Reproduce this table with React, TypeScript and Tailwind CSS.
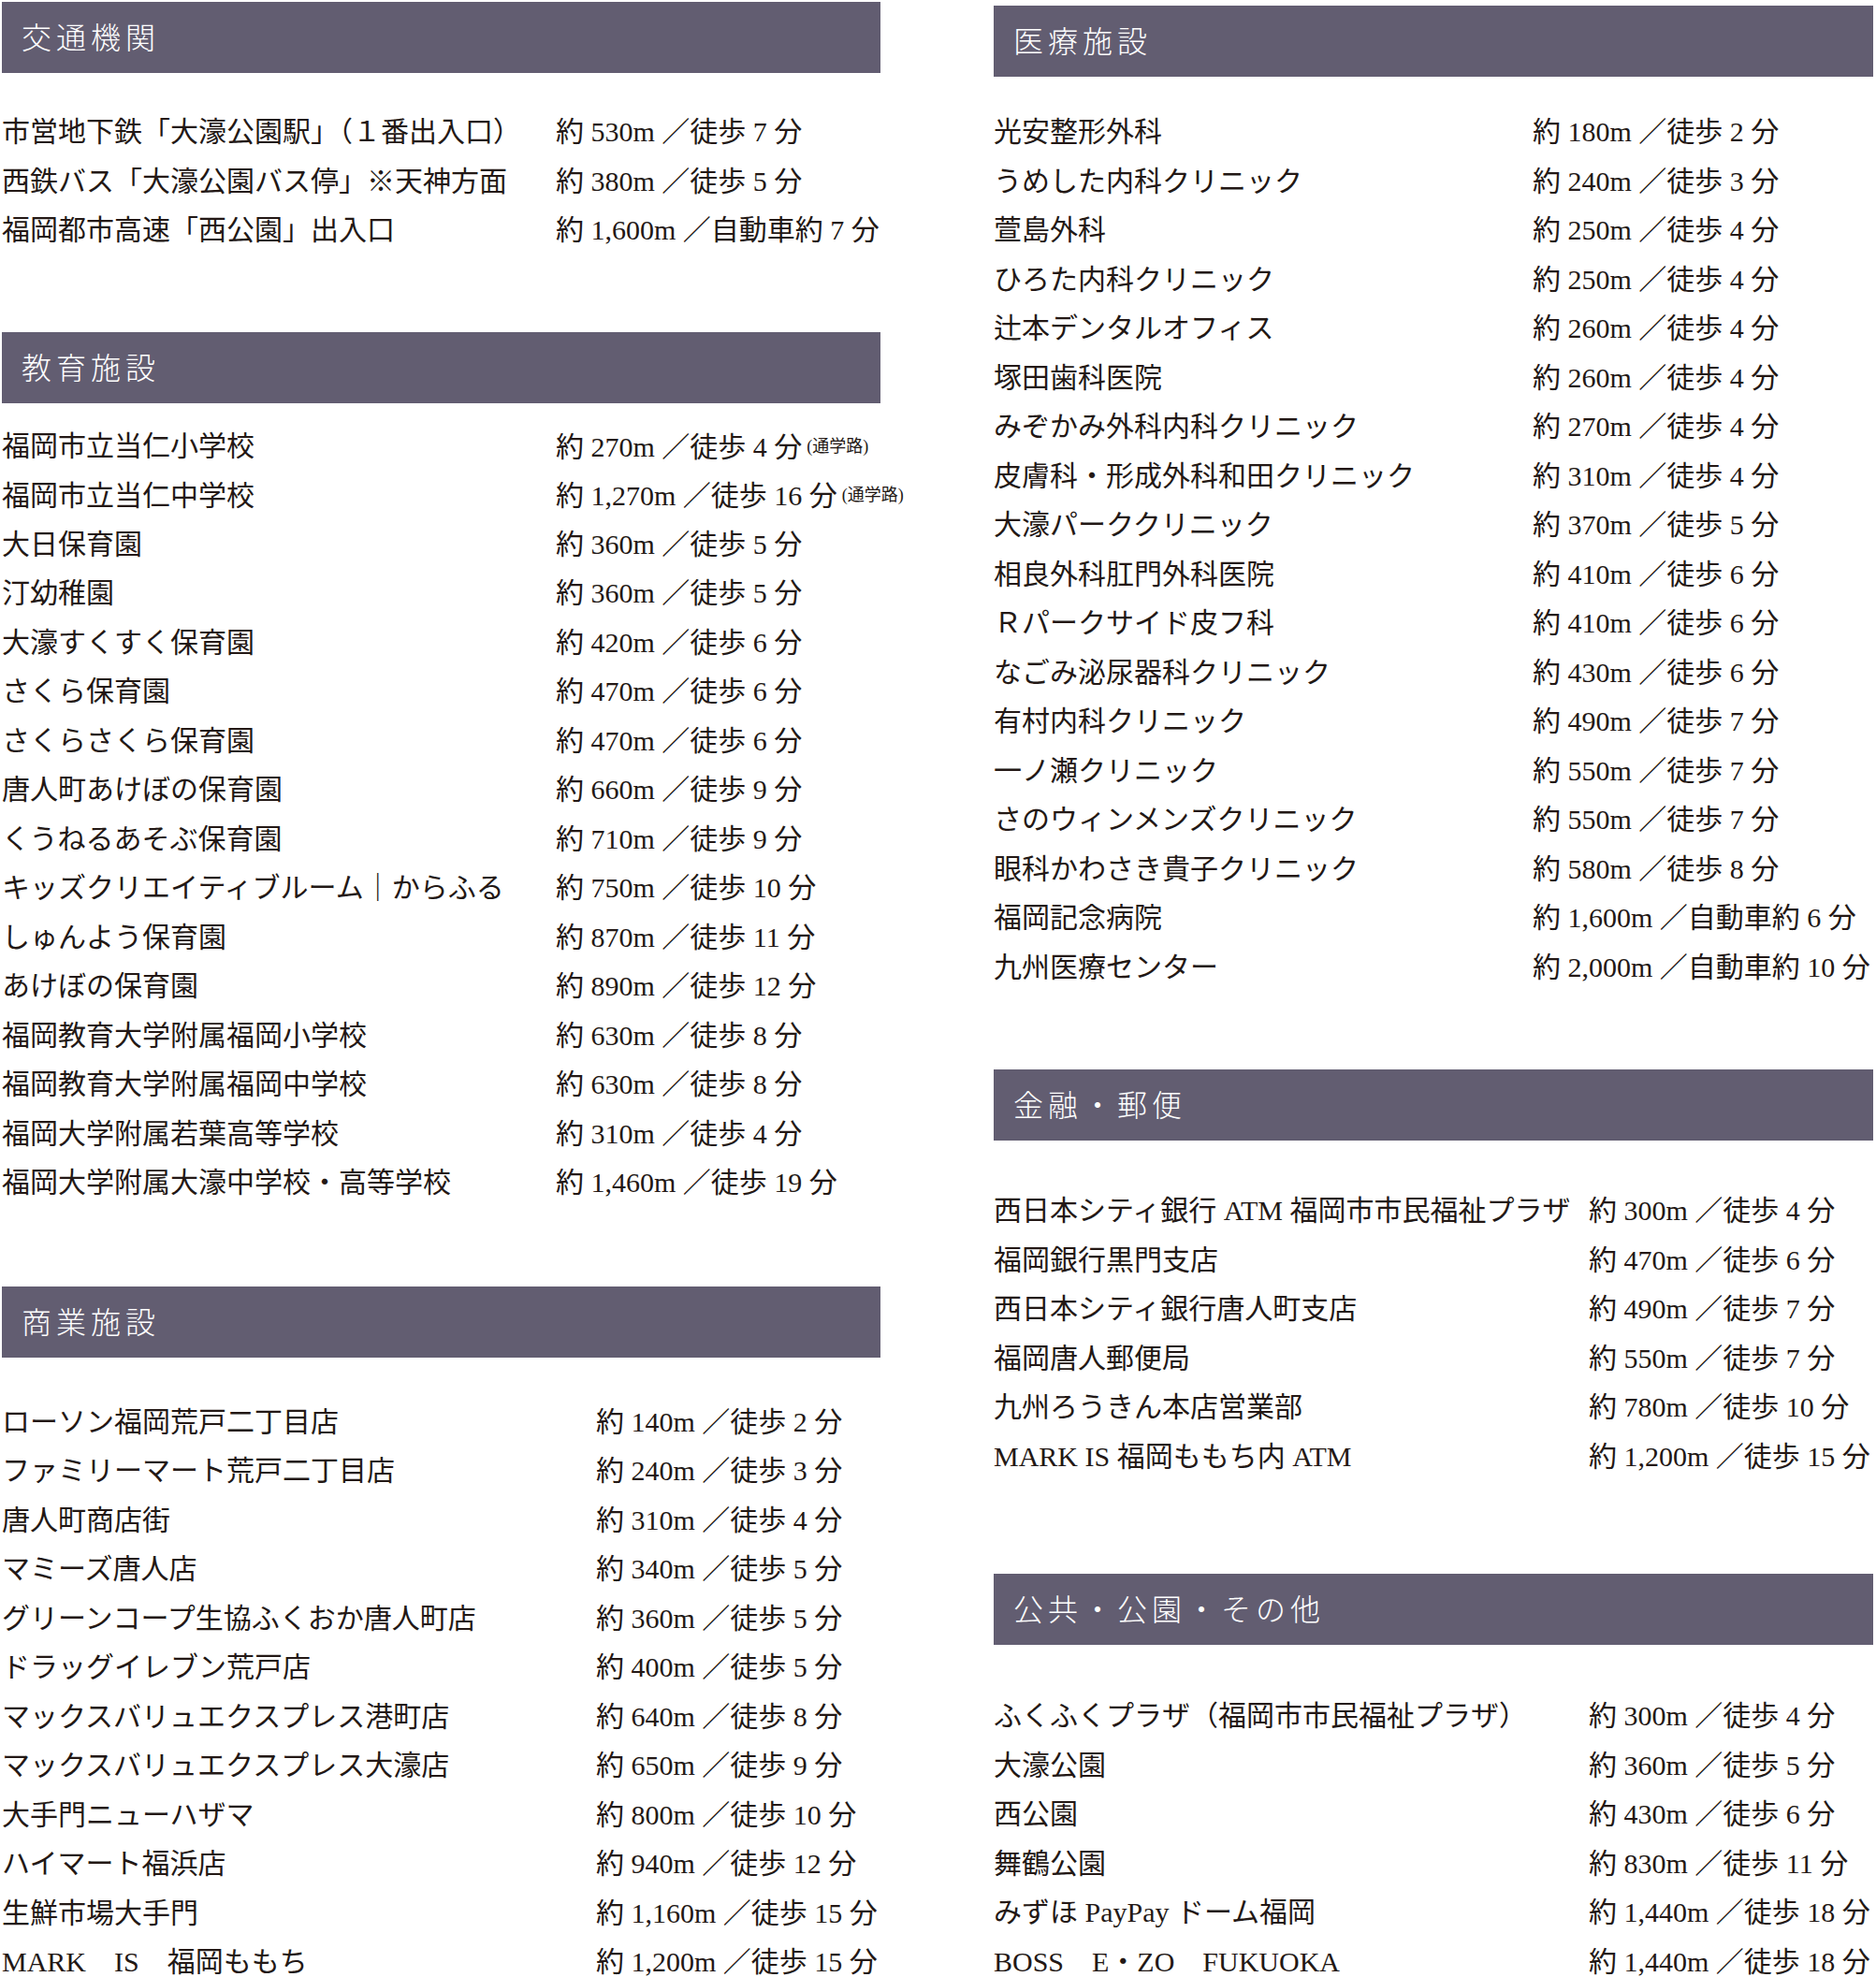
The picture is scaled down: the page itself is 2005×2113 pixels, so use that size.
import React from "react";

type Row = [string, string, string?];

const Section = ({
  title,
  rows,
  wrap,
  rowsClass,
  gridClass,
}: {
  title: string;
  rows: Row[];
  wrap: string;
  rowsClass: string;
  gridClass: string;
}) => (
  <section className={wrap}>
    <div className="h-[76px] bg-[#625d71] flex items-center pl-[21px] pt-[3px] text-white text-[32px] tracking-[5px] font-light">
      {title}
    </div>
    <div className={rowsClass}>
      {rows.map(([name, dist, note], i) => (
        <div key={i} className={gridClass}>
          <div className="whitespace-nowrap">{name}</div>
          <div className="whitespace-nowrap">
            {dist}
            {note ? <span className="text-[18px] ml-[5px] align-[5px]">{note}</span> : null}
          </div>
        </div>
      ))}
    </div>
  </section>
);

const transport: Row[] = [
  ["市営地下鉄「大濠公園駅」（１番出入口）", "約 530m ／徒歩 7 分"],
  ["西鉄バス「大濠公園バス停」※天神方面", "約 380m ／徒歩 5 分"],
  ["福岡都市高速「西公園」出入口", "約 1,600m ／自動車約 7 分"],
];

const education: Row[] = [
  ["福岡市立当仁小学校", "約 270m ／徒歩 4 分", "(通学路)"],
  ["福岡市立当仁中学校", "約 1,270m ／徒歩 16 分", "(通学路)"],
  ["大日保育園", "約 360m ／徒歩 5 分"],
  ["汀幼稚園", "約 360m ／徒歩 5 分"],
  ["大濠すくすく保育園", "約 420m ／徒歩 6 分"],
  ["さくら保育園", "約 470m ／徒歩 6 分"],
  ["さくらさくら保育園", "約 470m ／徒歩 6 分"],
  ["唐人町あけぼの保育園", "約 660m ／徒歩 9 分"],
  ["くうねるあそぶ保育園", "約 710m ／徒歩 9 分"],
  ["キッズクリエイティブルーム｜からふる", "約 750m ／徒歩 10 分"],
  ["しゅんよう保育園", "約 870m ／徒歩 11 分"],
  ["あけぼの保育園", "約 890m ／徒歩 12 分"],
  ["福岡教育大学附属福岡小学校", "約 630m ／徒歩 8 分"],
  ["福岡教育大学附属福岡中学校", "約 630m ／徒歩 8 分"],
  ["福岡大学附属若葉高等学校", "約 310m ／徒歩 4 分"],
  ["福岡大学附属大濠中学校・高等学校", "約 1,460m ／徒歩 19 分"],
];

const commercial: Row[] = [
  ["ローソン福岡荒戸二丁目店", "約 140m ／徒歩 2 分"],
  ["ファミリーマート荒戸二丁目店", "約 240m ／徒歩 3 分"],
  ["唐人町商店街", "約 310m ／徒歩 4 分"],
  ["マミーズ唐人店", "約 340m ／徒歩 5 分"],
  ["グリーンコープ生協ふくおか唐人町店", "約 360m ／徒歩 5 分"],
  ["ドラッグイレブン荒戸店", "約 400m ／徒歩 5 分"],
  ["マックスバリュエクスプレス港町店", "約 640m ／徒歩 8 分"],
  ["マックスバリュエクスプレス大濠店", "約 650m ／徒歩 9 分"],
  ["大手門ニューハザマ", "約 800m ／徒歩 10 分"],
  ["ハイマート福浜店", "約 940m ／徒歩 12 分"],
  ["生鮮市場大手門", "約 1,160m ／徒歩 15 分"],
  ["MARK　IS　福岡ももち", "約 1,200m ／徒歩 15 分"],
];

const medical: Row[] = [
  ["光安整形外科", "約 180m ／徒歩 2 分"],
  ["うめした内科クリニック", "約 240m ／徒歩 3 分"],
  ["萱島外科", "約 250m ／徒歩 4 分"],
  ["ひろた内科クリニック", "約 250m ／徒歩 4 分"],
  ["辻本デンタルオフィス", "約 260m ／徒歩 4 分"],
  ["塚田歯科医院", "約 260m ／徒歩 4 分"],
  ["みぞかみ外科内科クリニック", "約 270m ／徒歩 4 分"],
  ["皮膚科・形成外科和田クリニック", "約 310m ／徒歩 4 分"],
  ["大濠パーククリニック", "約 370m ／徒歩 5 分"],
  ["相良外科肛門外科医院", "約 410m ／徒歩 6 分"],
  ["Ｒパークサイド皮フ科", "約 410m ／徒歩 6 分"],
  ["なごみ泌尿器科クリニック", "約 430m ／徒歩 6 分"],
  ["有村内科クリニック", "約 490m ／徒歩 7 分"],
  ["一ノ瀬クリニック", "約 550m ／徒歩 7 分"],
  ["さのウィンメンズクリニック", "約 550m ／徒歩 7 分"],
  ["眼科かわさき貴子クリニック", "約 580m ／徒歩 8 分"],
  ["福岡記念病院", "約 1,600m ／自動車約 6 分"],
  ["九州医療センター", "約 2,000m ／自動車約 10 分"],
];

const finance: Row[] = [
  ["西日本シティ銀行 ATM 福岡市市民福祉プラザ", "約 300m ／徒歩 4 分"],
  ["福岡銀行黒門支店", "約 470m ／徒歩 6 分"],
  ["西日本シティ銀行唐人町支店", "約 490m ／徒歩 7 分"],
  ["福岡唐人郵便局", "約 550m ／徒歩 7 分"],
  ["九州ろうきん本店営業部", "約 780m ／徒歩 10 分"],
  ["MARK IS 福岡ももち内 ATM", "約 1,200m ／徒歩 15 分"],
];

const publicRows: Row[] = [
  ["ふくふくプラザ（福岡市市民福祉プラザ）", "約 300m ／徒歩 4 分"],
  ["大濠公園", "約 360m ／徒歩 5 分"],
  ["西公園", "約 430m ／徒歩 6 分"],
  ["舞鶴公園", "約 830m ／徒歩 11 分"],
  ["みずほ PayPay ドーム福岡", "約 1,440m ／徒歩 18 分"],
  ["BOSS　E・ZO　FUKUOKA", "約 1,440m ／徒歩 18 分"],
];

export default function App() {
  return (
    <div className="w-[2005px] min-h-[2113px] bg-white text-[#231815] font-['Liberation_Serif','Noto_Sans_CJK_JP',serif] text-[30px] leading-[52.5px] flex gap-[121px] pl-[2px]">
      <div className="w-[939px] pt-[2px] flex flex-col">
        <Section
          title="交通機関"
          rows={transport}
          wrap=""
          rowsClass="mt-[37px]"
          gridClass="grid grid-cols-[592px_auto] h-[52.5px] items-center"
        />
        <Section
          title="教育施設"
          rows={education}
          wrap="mt-[82px]"
          rowsClass="mt-[20px]"
          gridClass="grid grid-cols-[592px_auto] h-[52.5px] items-center"
        />
        <Section
          title="商業施設"
          rows={commercial}
          wrap="mt-[84px]"
          rowsClass="mt-[43px]"
          gridClass="grid grid-cols-[635px_auto] h-[52.5px] items-center"
        />
      </div>
      <div className="w-[940px] pt-[6px] flex flex-col">
        <Section
          title="医療施設"
          rows={medical}
          wrap=""
          rowsClass="mt-[33px]"
          gridClass="grid grid-cols-[576px_auto] h-[52.5px] items-center"
        />
        <Section
          title="金融・郵便"
          rows={finance}
          wrap="mt-[83px]"
          rowsClass="mt-[49px]"
          gridClass="grid grid-cols-[636px_auto] h-[52.5px] items-center"
        />
        <Section
          title="公共・公園・その他"
          rows={publicRows}
          wrap="mt-[99px]"
          rowsClass="mt-[50px]"
          gridClass="grid grid-cols-[636px_auto] h-[52.5px] items-center"
        />
      </div>
    </div>
  );
}
